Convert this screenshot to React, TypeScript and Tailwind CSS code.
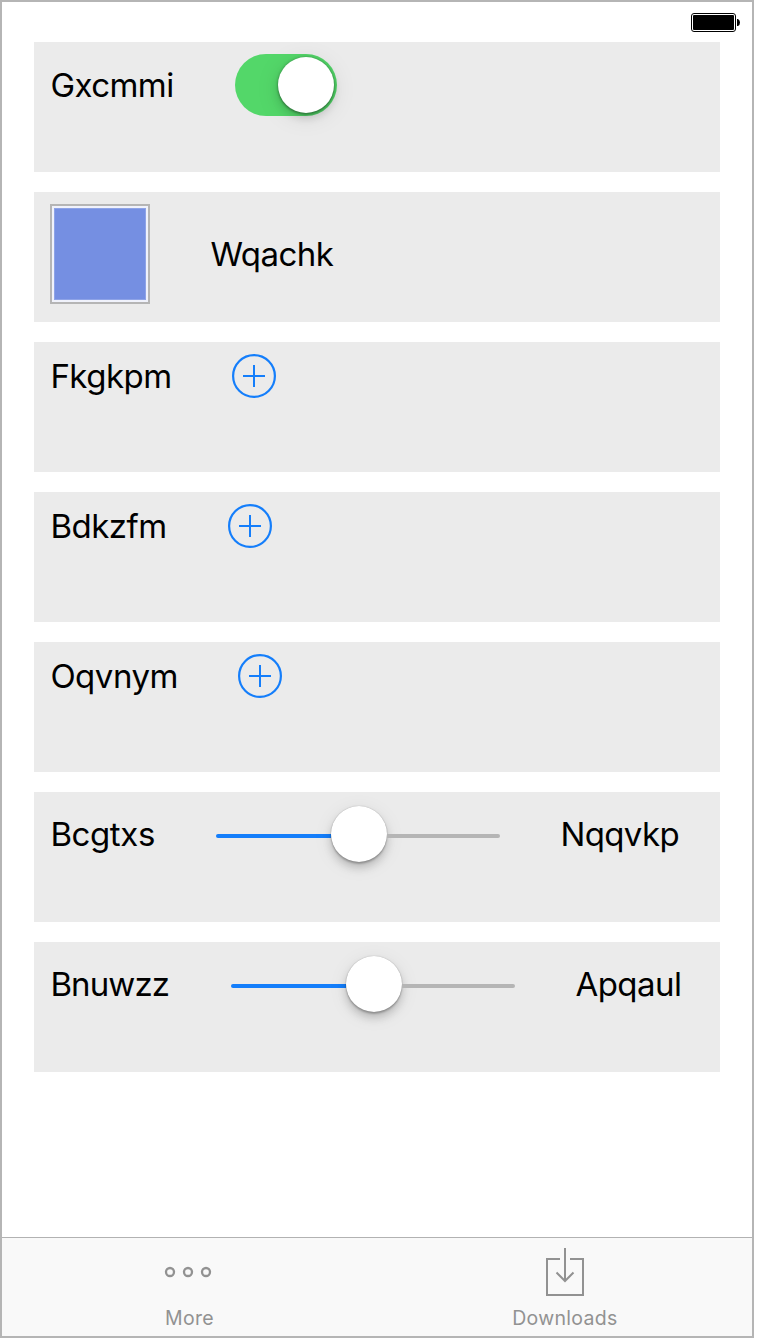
import type { ReactNode } from "react";

function Card({ children, className = "" }: { children: ReactNode; className?: string }) {
  return (
    <section className={`flex h-[130px] w-[686px] items-start bg-[#ebebeb] pl-4 pt-3 ${className}`}>
      {children}
    </section>
  );
}

function Label({ text, className }: { text: string; className: string }) {
  return <span className={`block shrink-0 whitespace-nowrap pl-[0.4px] text-[33px] leading-[44px] ${className}`}>{text}</span>;
}

function AddButton() {
  return (
    <button type="button" aria-label="Add" className="ml-[60px] size-11 shrink-0">
      <svg viewBox="0 0 44 44" className="size-11" fill="none" stroke="#147efb" strokeWidth="2">
        <circle cx="22" cy="22" r="20.9" strokeWidth="2.2" />
        <path d="M11 22h22M22 11v22" />
      </svg>
    </button>
  );
}

function Slider() {
  return (
    <div className="ml-[60px] flex h-[62px] w-[284px] shrink-0 items-center pt-[2px]">
      <div className="h-1 w-[115px] rounded-l-full bg-[#147efb]" />
      <div className="-mt-1 size-14 shrink-0 rounded-full bg-white shadow-[0_0_1px_rgba(0,0,0,0.35),0_6px_8px_rgba(0,0,0,0.17),0_2px_2px_rgba(0,0,0,0.22),0_4px_20px_rgba(0,0,0,0.08)]" />
      <div className="h-1 flex-1 rounded-r-full bg-[#b5b5b5]" />
    </div>
  );
}

export default function App() {
  return (
    <div className="h-[1340px] w-[760px] overflow-hidden bg-white font-['Inter',sans-serif] text-black">
      <div className="flex h-[1338px] w-[754px] flex-col border-2 border-[#b5b5b5] bg-white">
        <header className="flex h-10 shrink-0 justify-end pr-3 pt-[11px]">
          <svg width="49" height="19" viewBox="0 0 49 19" aria-label="Battery">
            <rect x=".5" y=".5" width="44" height="18" rx="2.5" fill="white" stroke="black" />
            <rect x="2" y="2" width="41" height="15" rx="1" fill="black" />
            <path d="M46 6h1q2 1 2 3.5T47 13h-1z" fill="black" />
          </svg>
        </header>
        <main className="flex flex-1 flex-col gap-5 pl-8">
          <Card>
            <Label text="Gxcmmi" className="mt-[9px] w-[125px] tracking-[-0.55px]" />
            <div className="ml-[60px] flex h-[62px] w-[102px] items-center justify-end rounded-full bg-[#53d769] pr-[3px]">
              <div className="size-14 rounded-full bg-white shadow-[0_0_3px_rgba(0,0,0,0.3),0_5px_8px_rgba(0,0,0,0.14),0_2px_2px_rgba(0,0,0,0.2),0_4px_24px_rgba(0,0,0,0.1)]" />
            </div>
          </Card>
          <Card>
            <div className="size-[100px] border-2 border-[#b5b5b5] bg-[#f0f2fb] p-[2px]">
              <div className="size-full border border-[#8ea3e7] bg-[#758fe2]" />
            </div>
            <Label text="Wqachk" className="ml-[60px] mt-[28px] w-[124px] tracking-[-0.5px]" />
          </Card>
          <Card>
            <Label text="Fkgkpm" className="w-[122px] tracking-[-0.5px]" />
            <AddButton />
          </Card>
          <Card>
            <Label text="Bdkzfm" className="w-[118px] tracking-[-0.5px]" />
            <AddButton />
          </Card>
          <Card>
            <Label text="Oqvnym" className="w-[128px] tracking-[-0.5px]" />
            <AddButton />
          </Card>
          <Card>
            <Label text="Bcgtxs" className="mt-[8px] w-[106px] tracking-[-0.4px]" />
            <Slider />
            <Label text="Nqqvkp" className="ml-[60px] mt-[8px] w-[120px] tracking-[-0.6px]" />
          </Card>
          <Card>
            <Label text="Bnuwzz" className="mt-[8px] w-[121px] tracking-[-0.9px]" />
            <Slider />
            <Label text="Apqaul" className="ml-[60px] mt-[8px] w-[108px] tracking-[-0.5px]" />
          </Card>
        </main>
        <nav className="grid h-[99px] shrink-0 grid-cols-2 border-t border-[#b2b2b2] bg-[#f9f9f9] text-[19.5px] leading-6 text-[#929292]">
          <div className="flex flex-col items-center">
            <svg width="49" height="68" viewBox="0 0 49 68" className="shrink-0 overflow-visible" fill="none" stroke="#929292" strokeWidth="2.3">
              <circle cx="5" cy="34" r="4" />
              <circle cx="23" cy="34" r="4" />
              <circle cx="41" cy="34" r="4" />
            </svg>
            <span className="tracking-[0.3px]">More</span>
          </div>
          <div className="flex flex-col items-center">
            <svg width="40" height="68" viewBox="0 0 40 68" className="shrink-0" fill="none" stroke="#929292" strokeWidth="2">
              <path d="M15 21H2v36h36V21H25M20 10v33M11.5 34.5l8.5 8.5 8.5-8.5" />
            </svg>
            <span className="pl-[0.8px] tracking-[0.3px]">Downloads</span>
          </div>
        </nav>
      </div>
    </div>
  );
}
